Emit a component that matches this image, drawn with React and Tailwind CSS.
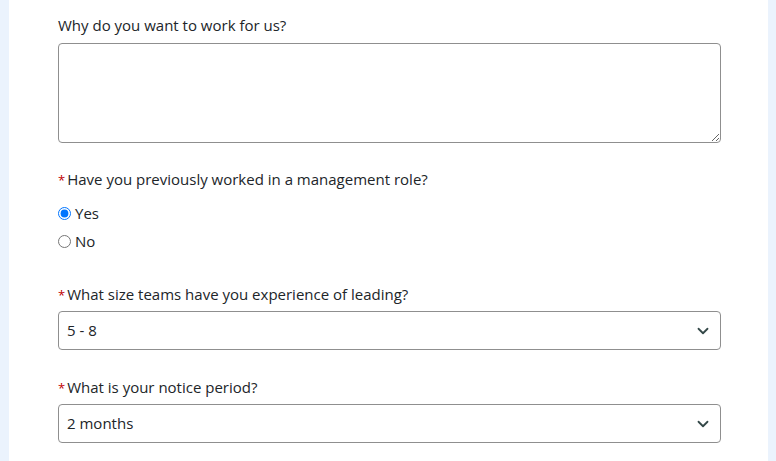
import React, { useState } from 'react';

function Chevron() {
  return (
    <svg
      width="12"
      height="12"
      viewBox="0 0 16 16"
      className="pointer-events-none absolute right-[12px] top-1/2 -translate-y-1/2"
    >
      <path
        d="M2 5l6 6 6-6"
        fill="none"
        stroke="#344848"
        strokeWidth="2.4"
        strokeLinecap="round"
        strokeLinejoin="round"
      />
    </svg>
  );
}

function Label({ children, required }) {
  return (
    <div className="text-[15px] leading-[22px] text-[#212529]">
      {required && <span className="mr-[2px] text-[13px] text-[#c00000]">*</span>}
      {children}
    </div>
  );
}

function SelectField({ value, options, onChange }) {
  return (
    <div className="relative mt-[5px]">
      <select
        value={value}
        onChange={(e) => onChange(e.target.value)}
        className="h-[39px] w-full appearance-none rounded-[4px] border border-[#8f8f8f] bg-white pl-[8px] text-[15px] text-[#212529] outline-none"
      >
        {options.map((o) => (
          <option key={o}>{o}</option>
        ))}
      </select>
      <Chevron />
    </div>
  );
}

export default function App() {
  const [managed, setManaged] = useState('yes');
  const [team, setTeam] = useState('5 - 8');
  const [notice, setNotice] = useState('2 months');

  return (
    <div
      className="flex h-[461px] w-[776px] bg-[#ebf3fd]"
      style={{ fontFamily: '"Open Sans", "Noto Sans", sans-serif' }}
    >
      <div className="ml-[9px] mr-[8px] flex-1 overflow-hidden bg-white pl-[49px] pr-[47px] pt-[14px]">
        <Label>Why do you want to work for us?</Label>
        <textarea className="mt-[7px] block h-[100px] w-full rounded-[4px] border border-[#8f8f8f] outline-none" />

        <div className="mt-[25px]">
          <Label required>Have you previously worked in a management role?</Label>
        </div>
        <div className="mt-[11px] flex flex-col gap-[6px] text-[15px] text-[#212529]">
          <label className="flex h-[22px] items-center">
            <input
              type="radio"
              name="mgmt"
              checked={managed === 'yes'}
              onChange={() => setManaged('yes')}
              className="m-0 mr-[4px] h-[13px] w-[13px]"
            />
            Yes
          </label>
          <label className="flex h-[22px] items-center">
            <input
              type="radio"
              name="mgmt"
              checked={managed === 'no'}
              onChange={() => setManaged('no')}
              className="m-0 mr-[4px] h-[13px] w-[13px]"
            />
            No
          </label>
        </div>

        <div className="mt-[31px]">
          <Label required>What size teams have you experience of leading?</Label>
        </div>
        <SelectField
          value={team}
          onChange={setTeam}
          options={['1 - 4', '5 - 8', '9 - 12', '13+']}
        />

        <div className="mt-[26px]">
          <Label required>What is your notice period?</Label>
        </div>
        <SelectField
          value={notice}
          onChange={setNotice}
          options={['1 month', '2 months', '3 months']}
        />
      </div>
    </div>
  );
}
